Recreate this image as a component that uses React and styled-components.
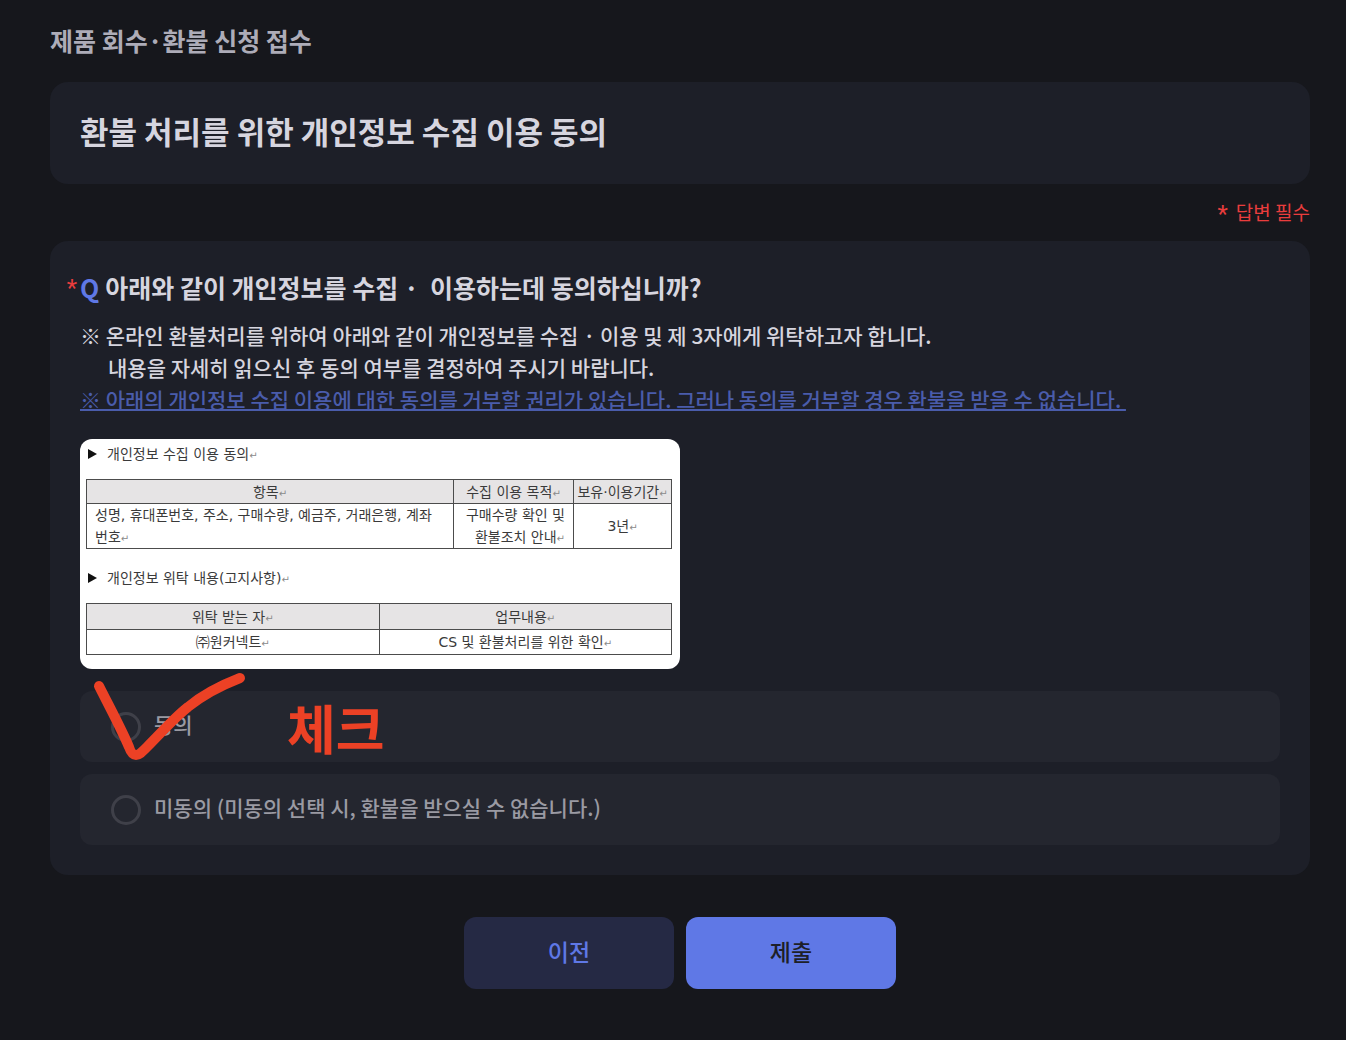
import React, { Component } from 'react'
import styled, { createGlobalStyle } from 'styled-components'

const GlobalStyle = createGlobalStyle`
  * {
    box-sizing: border-box;
  }
  body {
    margin: 0;
    background: #16171c;
    color: #d6d5df;
    font-family: 'Noto Sans CJK KR', sans-serif;
  }
`

const Page = styled.form`
  padding: 20px 36px 48px 50px;
`

const ServiceName = styled.p`
  margin: 0 0 22px;
  color: #adacb8;
  font-size: 25px;
  font-weight: 700;
  line-height: 40px;
`

const Card = styled.section`
  padding: 28px 30px 30px;
  border-radius: 18px;
  background: #1d1f28;
`

const Title = styled.h1`
  margin: 0 0 2px;
  font-size: 31px;
  font-weight: 700;
  line-height: 42px;
`

const RequiredNote = styled.p`
  display: flex;
  justify-content: flex-end;
  align-items: center;
  gap: 8px;
  margin: 14px 0 15px;
  color: #e93d3d;
  font-size: 19px;
  line-height: 28px;
`

const Star = styled.span`
  padding-top: 4px;
  color: #e93d3d;
  font-family: Roboto, sans-serif;
  font-size: 24px;
  font-weight: 400;
  line-height: 20px;
`

const Question = styled.h2`
  display: flex;
  gap: 6px;
  margin: 0 0 14px;
  font-size: 25px;
  font-weight: 700;
  line-height: 36px;
  white-space: pre-wrap;
`

const QuestionMark = styled.span`
  position: relative;
  color: #5f78e6;
`

const QuestionStar = styled(Star)`
  position: absolute;
  top: 5px;
  right: 100%;
  margin-right: 3px;
`

const Guide = styled.p`
  margin: 0;
  padding-left: ${props => (props.$indent ? '28px' : '0')};
  color: ${props => (props.$notice ? '#4a5cab' : 'inherit')};
  text-decoration: ${props => (props.$notice ? 'underline' : 'none')};
  text-decoration-thickness: 2px;
  font-size: 21px;
  font-weight: 500;
  line-height: 32px;
  white-space: pre-wrap;
`

const Sheet = styled.div`
  max-width: 600px;
  margin: 24px 0 22px;
  padding: 0 8px 14px 6px;
  border-radius: 12px;
  background: #fff;
  color: #3a3a3a;
  font-family: 'DejaVu Sans', 'Noto Sans CJK KR', sans-serif;
  font-size: 14px;
  line-height: 22px;
`

const SheetHeading = styled.h3`
  display: flex;
  align-items: center;
  gap: 10px;
  margin: ${props => (props.$second ? '14px' : '0')} 0 10px;
  padding-left: 2px;
  font-size: 14px;
  font-weight: 400;
  line-height: 30px;
`

const SheetTable = styled.table`
  width: 100%;
  border-collapse: collapse;
  table-layout: fixed;
`

const Th = styled.th`
  width: ${props => props.$width || 'auto'};
  height: ${props => (props.$tall ? '26px' : '24px')};
  padding: 0;
  border: 1px solid #4c4c4c;
  background: #e6e4e5;
  font-weight: 400;
  white-space: nowrap;
`

const Td = styled.td`
  height: 25px;
  padding: 0 8px;
  border: 1px solid #4c4c4c;
  text-align: ${props => props.$align || 'center'};
`

const ReturnMark = styled.span`
  color: #8a8a8a;
  font-size: 10px;
  line-height: 1;
`

const Options = styled.div`
  display: flex;
  flex-direction: column;
  gap: 12px;
`

const Option = styled.label`
  position: relative;
  display: flex;
  align-items: center;
  gap: 13px;
  min-height: 71px;
  padding: 0 31px;
  border-radius: 12px;
  background: #24262f;
  color: #9a9aa3;
  font-size: 21px;
  font-weight: 500;
`

const OptionText = styled.span`
  padding-bottom: 6px;
`

const Radio = styled.input`
  appearance: none;
  width: 30px;
  height: 30px;
  margin: 0;
  border: 3px solid #3f4049;
  border-radius: 50%;
  &:checked {
    border-color: #5f78e6;
  }
`

const CheckDrawing = styled.svg`
  position: absolute;
  top: -22px;
  left: 10px;
  pointer-events: none;
`

const CheckLabel = styled.span`
  position: absolute;
  left: 207px;
  color: #ec4125;
  font-size: 53px;
  font-weight: 700;
  line-height: 70px;
`

const Actions = styled.div`
  display: flex;
  justify-content: center;
  gap: 12px;
  margin-top: 42px;
`

const Button = styled.button`
  width: 210px;
  height: 72px;
  padding: 0 0 4px;
  border: none;
  border-radius: 12px;
  background: ${props => (props.$primary ? '#5f78e6' : '#252944')};
  color: ${props => (props.$primary ? '#1d1f28' : '#5f78e6')};
  font-family: inherit;
  font-size: 23px;
  font-weight: 500;
`

const Enter = () => <ReturnMark>↵</ReturnMark>

const Arrow = () => (
  <svg width="9" height="10" viewBox="0 0 9 10" aria-hidden="true">
    <path d="M0 0L9 5L0 10Z" fill="#111" />
  </svg>
)

export default class App extends Component {
  constructor() {
    super()

    this.state = {
      agree: null,
    }

    this.onChange = this.onChange.bind(this)
  }

  onChange(e) {
    this.setState({ agree: e.target.value })
  }

  render() {
    const { agree } = this.state

    return (
      <>
        <GlobalStyle />
        <Page onSubmit={e => e.preventDefault()}>
          <ServiceName>제품 회수·환불 신청 접수</ServiceName>
          <Card>
            <Title>환불 처리를 위한 개인정보 수집 이용 동의</Title>
          </Card>
          <RequiredNote><Star>*</Star><span>답변 필수</span></RequiredNote>
          <Card>
            <Question id="question">
              <QuestionMark><QuestionStar>*</QuestionStar>Q</QuestionMark>
              <span>{'아래와 같이 개인정보를 수집 ·  이용하는데 동의하십니까?'}</span>
            </Question>
            <Guide>※ 온라인 환불처리를 위하여 아래와 같이 개인정보를 수집 · 이용 및 제 3자에게 위탁하고자 합니다.</Guide>
            <Guide $indent>내용을 자세히 읽으신 후 동의 여부를 결정하여 주시기 바랍니다.</Guide>
            <Guide $notice>{'※ 아래의 개인정보 수집 이용에 대한 동의를 거부할 권리가 있습니다. 그러나 동의를 거부할 경우 환불을 받을 수 없습니다.\u00a0'}</Guide>

            <Sheet>
              <SheetHeading><Arrow /><span>개인정보 수집 이용 동의<Enter /></span></SheetHeading>
              <SheetTable>
                <thead>
                  <tr>
                    <Th>항목<Enter /></Th>
                    <Th $width="120px">수집 이용 목적<Enter /></Th>
                    <Th $width="98px">보유·이용기간<Enter /></Th>
                  </tr>
                </thead>
                <tbody>
                  <tr>
                    <Td $align="left">성명, 휴대폰번호, 주소, 구매수량, 예금주, 거래은행, 계좌<br />번호<Enter /></Td>
                    <Td $align="right">구매수량 확인 및<br />환불조치 안내<Enter /></Td>
                    <Td>3년<Enter /></Td>
                  </tr>
                </tbody>
              </SheetTable>
              <SheetHeading $second><Arrow /><span>개인정보 위탁 내용(고지사항)<Enter /></span></SheetHeading>
              <SheetTable>
                <thead>
                  <tr>
                    <Th $tall $width="50%">위탁 받는 자<Enter /></Th>
                    <Th $tall $width="50%">업무내용<Enter /></Th>
                  </tr>
                </thead>
                <tbody>
                  <tr>
                    <Td>㈜원커넥트<Enter /></Td>
                    <Td>CS 및 환불처리를 위한 확인<Enter /></Td>
                  </tr>
                </tbody>
              </SheetTable>
            </Sheet>

            <Options role="radiogroup" aria-labelledby="question">
              <Option>
                <Radio type="radio" name="agree" value="yes" checked={agree === 'yes'} onChange={this.onChange} />
                <OptionText>동의</OptionText>
                <CheckDrawing width="164" height="100" viewBox="0 0 164 100" fill="none" aria-hidden="true">
                  <path
                    d="M9 17C19 37 31 59 39 78C41 84 43 86 46 86C49 86 51 84 57 78C72 63 84 49 98 38C115 24 132 16 150 9"
                    stroke="#ec4125"
                    strokeWidth="10"
                    strokeLinecap="round"
                    strokeLinejoin="round"
                  />
                </CheckDrawing>
                <CheckLabel>체크</CheckLabel>
              </Option>
              <Option>
                <Radio type="radio" name="agree" value="no" checked={agree === 'no'} onChange={this.onChange} />
                <OptionText>미동의 (미동의 선택 시, 환불을 받으실 수 없습니다.)</OptionText>
              </Option>
            </Options>
          </Card>
          <Actions>
            <Button type="button">이전</Button>
            <Button type="submit" $primary>제출</Button>
          </Actions>
        </Page>
      </>
    )
  }
}
